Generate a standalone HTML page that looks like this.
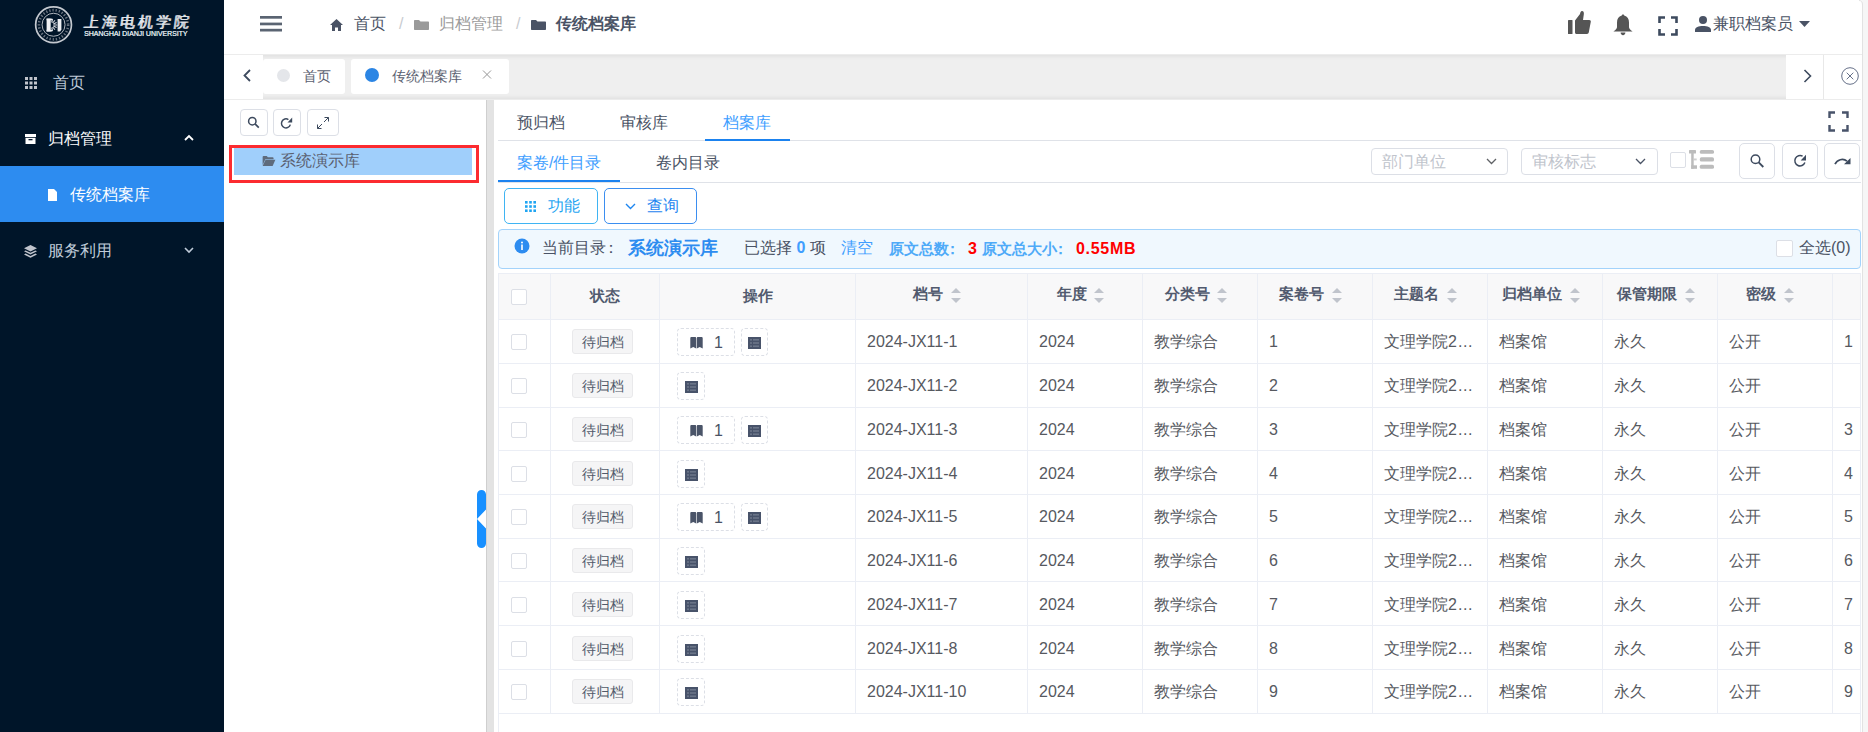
<!DOCTYPE html>
<html><head><meta charset="utf-8">
<style>
*{box-sizing:border-box;margin:0;padding:0}
html,body{width:1868px;height:732px;overflow:hidden;background:#fff;font-family:"Liberation Sans",sans-serif;font-size:16px;color:#606266}
.a{position:absolute}
svg{display:block}
#side{left:0;top:0;width:224px;height:732px;background:#001529}
.mi{position:absolute;left:0;width:224px;height:56px;line-height:58px;font-size:16px;color:#bfcbd9;white-space:nowrap}
#hdr{left:224px;top:0;width:1638px;height:55px;background:#fff;border-bottom:1px solid #ececec}
.bc{position:absolute;top:0;height:48px;line-height:48px;font-size:16px;white-space:nowrap}
#tabs{left:224px;top:55px;width:1637px;height:44px;background:#efefef;box-shadow:inset 0 3px 4px -2px rgba(0,0,0,.08),inset 0 -3px 4px -2px rgba(0,0,0,.08)}
.tab{position:absolute;top:4px;height:35px;background:#fff;border-radius:3px;font-size:14px;line-height:35px;color:#5a6070;white-space:nowrap}
#vline{left:1862px;top:0;width:1px;height:732px;background:#e2e2e2}
#vfill{left:1863px;top:0;width:5px;height:732px;background:#f6f6f6}
.tbtn{position:absolute;width:28px;height:27px;border:1px solid #dcdfe6;border-radius:4px;background:#fff}
.ptab{position:absolute;font-size:16px;color:#4a5365;white-space:nowrap;line-height:20px}
.sel{position:absolute;top:148px;width:137px;height:27px;border:1px solid #dcdfe6;border-radius:4px;background:#fff;font-size:16px;color:#c0c4cc;line-height:25px;padding-left:10px;white-space:nowrap}
.ibtn{position:absolute;top:143px;width:36px;height:36px;border:1px solid #dcdfe6;border-radius:5px;background:#fff}
.cb{position:absolute;width:16px;height:16px;border:1px solid #dcdfe6;border-radius:2px;background:#fff}
.th{position:absolute;top:286px;height:20px;line-height:20px;font-size:15px;font-weight:bold;color:#515a6e;white-space:nowrap}
.caret{position:absolute;width:10px;height:15px}
.td{position:absolute;height:20px;line-height:20px;font-size:16px;color:#56595f;white-space:nowrap}
.tag{position:absolute;left:572px;width:61px;height:25px;border:1px solid #e9e9eb;background:#f5f5f6;border-radius:3px;font-size:14px;line-height:24px;text-align:center;color:#515a6a}
.dbox{position:absolute;height:28px;border:1px dashed #dcdfe6;border-radius:4px}
</style></head><body>

<!-- sidebar -->
<div id="side" class="a">
  <!-- logo -->
  <svg class="a" style="left:34px;top:5px" width="40" height="40" viewBox="0 0 40 40">
    <circle cx="19.55" cy="19.75" r="17.9" fill="none" stroke="#c3c8cf" stroke-width="1.7"/>
    <circle cx="19.55" cy="19.75" r="14.6" fill="none" stroke="#8d949e" stroke-width="2.6" stroke-dasharray="1.3 1.9" opacity="0.75"/>
    <circle cx="19.55" cy="19.75" r="11.5" fill="none" stroke="#aeb4bc" stroke-width="1"/>
    <rect x="12.6" y="13.6" width="4.1" height="12.9" fill="#eef0f3"/>
    <rect x="12.6" y="13.6" width="5.6" height="1.7" fill="#eef0f3"/>
    <rect x="12.6" y="24.8" width="5.6" height="1.7" fill="#eef0f3"/>
    <path d="M17.67 17.49L18.60 14.01M18.67 18.01L20.99 15.25M19.36 18.90L22.62 17.38M19.60 20.00L23.20 20.00M19.36 21.10L22.62 22.62M18.67 21.99L20.99 24.75M17.67 22.51L18.60 25.99" stroke="#d5d9df" stroke-width="1.1"/>
    <path d="M23.6 14h3.8v10.5l-1.2 2h-2.6z" fill="#eef0f3"/>
  </svg>
  <div class="a" style="left:84px;top:12px;font-family:'Liberation Serif',serif;font-size:15px;font-weight:normal;color:#e4e7eb;letter-spacing:3px;white-space:nowrap;line-height:20px;transform:skewX(-8deg);text-shadow:0.4px 0 0 #e4e7eb">上海电机学院</div>
  <div class="a" style="left:84px;top:30px;font-size:7px;font-weight:normal;color:#dde1e6;white-space:nowrap;line-height:8px;letter-spacing:-0.05px;text-shadow:0.3px 0 0 #dde1e6">SHANGHAI DIANJI UNIVERSITY</div>

  <div class="mi" style="top:54px">
    <svg class="a" style="left:25px;top:23px" width="12" height="12" viewBox="0 0 12 12" fill="#c0c4cc">
      <rect x="0" y="0" width="3" height="3"/><rect x="4.5" y="0" width="3" height="3"/><rect x="9" y="0" width="3" height="3"/>
      <rect x="0" y="4.5" width="3" height="3"/><rect x="4.5" y="4.5" width="3" height="3"/><rect x="9" y="4.5" width="3" height="3"/>
      <rect x="0" y="9" width="3" height="3"/><rect x="4.5" y="9" width="3" height="3"/><rect x="9" y="9" width="3" height="3"/>
    </svg>
    <span class="a" style="left:53px;top:0">首页</span>
  </div>
  <div class="mi" style="top:110px;color:#fff">
    <svg class="a" style="left:25px;top:24px" width="11" height="10" viewBox="0 0 11 10" fill="#fff">
      <rect x="0" y="0" width="11" height="3"/><path d="M0.5 3.8h10V10H.5z"/><rect x="3.5" y="5" width="4" height="1.3" fill="#001529"/>
    </svg>
    <span class="a" style="left:48px;top:0">归档管理</span>
    <svg class="a" style="left:184px;top:24px" width="10" height="7" viewBox="0 0 10 7"><path d="M1 6L5 2l4 4" fill="none" stroke="#fff" stroke-width="1.8"/></svg>
  </div>
  <div class="mi" style="top:166px;background:#2d8cf0;color:#fff">
    <svg class="a" style="left:48px;top:23px" width="9" height="12" viewBox="0 0 9 12" fill="#fff"><path d="M0 0h6l3 3v9H0z"/></svg>
    <span class="a" style="left:70px;top:0">传统档案库</span>
  </div>
  <div class="mi" style="top:222px">
    <svg class="a" style="left:24px;top:23px" width="13" height="13" viewBox="0 0 13 13" fill="#c0c4cc">
      <path d="M6.5 0L13 3.2 6.5 6.4 0 3.2z"/><path d="M1.6 5.4L6.5 7.8l4.9-2.4L13 6.3 6.5 9.5 0 6.3z"/><path d="M1.6 8.6L6.5 11l4.9-2.4 1.6.9-6.5 3.2L0 9.5z"/>
    </svg>
    <span class="a" style="left:48px;top:0">服务利用</span>
    <svg class="a" style="left:184px;top:25px" width="10" height="7" viewBox="0 0 10 7"><path d="M1 1l4 4 4-4" fill="none" stroke="#bfcbd9" stroke-width="1.6"/></svg>
  </div>
</div>

<!-- header -->
<div id="hdr" class="a">
  <svg class="a" style="left:36px;top:16px" width="22" height="16" viewBox="0 0 22 16" fill="#5a6472">
    <rect x="0" y="0" width="22" height="2.7"/><rect x="0" y="6.6" width="22" height="2.7"/><rect x="0" y="12.8" width="22" height="2.7"/>
  </svg>
  <svg class="a" style="left:106px;top:19px" width="13" height="12" viewBox="0 0 13 12" fill="#4a5365"><path d="M6.5 0L13 6h-2v6H8V8.5H5V12H2V6H0z"/></svg>
  <span class="bc" style="left:130px;color:#4a5365">首页</span>
  <span class="bc" style="left:175px;color:#c8cbd0">/</span>
  <svg class="a" style="left:190px;top:20px" width="15" height="10" viewBox="0 0 15 10" fill="#9a9a9a"><path d="M0 1c0-.6.4-1 1-1h4l1.5 1.5H14c.6 0 1 .4 1 1V9c0 .6-.4 1-1 1H1c-.6 0-1-.4-1-1z"/></svg>
  <span class="bc" style="left:215px;color:#9a9a9a">归档管理</span>
  <span class="bc" style="left:292px;color:#c8cbd0">/</span>
  <svg class="a" style="left:307px;top:20px" width="15" height="10" viewBox="0 0 15 10" fill="#4a5365"><path d="M0 1c0-.6.4-1 1-1h4l1.5 1.5H14c.6 0 1 .4 1 1V9c0 .6-.4 1-1 1H1c-.6 0-1-.4-1-1z"/></svg>
  <span class="bc" style="left:332px;color:#4a5365;font-weight:bold">传统档案库</span>

  <!-- right icons -->
  <svg class="a" style="left:1344px;top:11px" width="23" height="23" viewBox="0 0 23 23" fill="#555">
    <rect x="0" y="9" width="4.5" height="14" rx="0.6"/>
    <path d="M7 9.5l5-6.5c.4-1.6.7-3 2-3 1.6 0 2.2 1.6 1.8 3.5L15 9h6.3c1 0 1.7.8 1.5 1.8l-2 10.5c-.2.9-.9 1.7-1.8 1.7H8.5C7.7 23 7 22.3 7 21.5z"/>
  </svg>
  <svg class="a" style="left:1389px;top:14px" width="20" height="22" viewBox="0 0 20 22" fill="#555">
    <path d="M10 0.5c.8 0 1.2.5 1.2 1.1 3.3.7 4.8 3.4 4.8 6.9v4.6c0 1.4.9 2.6 3.6 4.5H.4C3.1 15.7 4 14.5 4 13.1V8.5c0-3.5 1.5-6.2 4.8-6.9 0-.6.4-1.1 1.2-1.1z"/>
    <path d="M7.6 18.6h4.8c0 1.5-1 2.6-2.4 2.6s-2.4-1.1-2.4-2.6z"/>
  </svg>
  <svg class="a" style="left:1434px;top:16px" width="20" height="20" viewBox="0 0 20 20" fill="none" stroke="#3d4a5e" stroke-width="2.6">
    <path d="M1.5 7V1.5H7M13 1.5h5.5V7M18.5 13v5.5H13M7 18.5H1.5V13"/>
  </svg>
  <svg class="a" style="left:1471px;top:16px" width="16" height="16" viewBox="0 0 16 16" fill="#4a5365">
    <circle cx="8" cy="4" r="4"/><path d="M0 16v-2.2C0 11.5 3.5 10 8 10s8 1.5 8 3.8V16z"/>
  </svg>
  <span class="bc" style="left:1489px;color:#4a5365;top:0">兼职档案员</span>
  <svg class="a" style="left:1575px;top:21px" width="11" height="6" viewBox="0 0 11 6" fill="#4a5365"><path d="M0 0h11L5.5 6z"/></svg>
</div>

<!-- tag bar -->
<div id="tabs" class="a">
  <div class="a" style="left:0;top:0;width:39px;height:44px;background:#fff">
    <svg class="a" style="left:19px;top:14px" width="8" height="13" viewBox="0 0 8 13"><path d="M7 1L1.5 6.5 7 12" fill="none" stroke="#3d4a5e" stroke-width="1.8"/></svg>
  </div>
  <div class="tab" style="left:39px;width:82px">
    <span class="a" style="left:14px;top:9.5px;width:13px;height:13px;border-radius:50%;background:#e4e6ea"></span>
    <span class="a" style="left:40px;top:0">首页</span>
  </div>
  <div class="tab" style="left:127px;width:158px">
    <span class="a" style="left:14px;top:9px;width:14px;height:14px;border-radius:50%;background:#2b85e4"></span>
    <span class="a" style="left:41px;top:0">传统档案库</span>
    <svg class="a" style="left:131px;top:11px" width="10" height="9" viewBox="0 0 10 9"><path d="M1 .5l8 8M9 .5l-8 8" stroke="#959595" stroke-width="1"/></svg>
  </div>
  <div class="a" style="left:1562px;top:0;width:38px;height:44px;background:#fff;border-right:1px solid #e8e8e8">
    <svg class="a" style="left:17px;top:14px" width="9" height="14" viewBox="0 0 9 14"><path d="M1.5 1l6 6-6 6" fill="none" stroke="#3d4a5e" stroke-width="1.6"/></svg>
  </div>
  <div class="a" style="left:1600px;top:0;width:37px;height:44px;background:#fff">
    <svg class="a" style="left:17px;top:12px" width="18" height="18" viewBox="0 0 18 18" fill="none" stroke="#55607a" stroke-width="0.9"><circle cx="9" cy="9" r="8.3"/><path d="M5.7 5.7l6.6 6.6M12.3 5.7l-6.6 6.6"/></svg>
  </div>
</div>

<div class="a" style="left:224px;top:99px;width:1637px;height:1px;background:#ececec"></div>
<div id="vline" class="a"></div>
<div id="vfill" class="a"></div>
<svg class="a" style="left:1854px;top:0" width="14" height="10" viewBox="0 0 14 10"><path d="M5 0Q8.5 0 8.5 5V10H14V0z" fill="#f6f6f6"/><path d="M5 0.5Q8.5 0.5 8.5 5V10" fill="none" stroke="#e2e2e2" stroke-width="1"/></svg>

<!-- left tree panel -->
<div class="tbtn" style="left:240px;top:109px">
  <svg class="a" style="left:6px;top:6px" width="14" height="14" viewBox="0 0 14 14" fill="none" stroke="#3d4a5e"><circle cx="5.3" cy="5.2" r="3.7" stroke-width="1.5"/><path d="M8 7.9l3.8 3.8" stroke-width="1.7"/></svg>
</div>
<div class="tbtn" style="left:273px;top:109px">
  <svg class="a" style="left:6px;top:7px" width="14" height="13" viewBox="0 0 14 13"><path d="M10.3 7.6A4.5 4.5 0 1 1 8.4 2.6" fill="none" stroke="#3d4a5e" stroke-width="1.5"/><path d="M12.2 0.6v4.9H7.5z" fill="#3d4a5e"/></svg>
</div>
<div class="tbtn" style="left:307px;top:109px;width:32px">
  <svg class="a" style="left:8px;top:6px" width="14" height="14" viewBox="0 0 14 14" fill="none" stroke="#3d4a5e" stroke-width="1"><path d="M8.5 1.5h4v4M12.5 1.5L8 6M5.5 12.5h-4v-4M1.5 12.5L6 8"/></svg>
</div>
<div class="a" style="left:229px;top:145px;width:250px;height:38px;border:3px solid #fc2b30"></div>
<div class="a" style="left:234px;top:148px;width:238px;height:27px;background:#a0cffb"></div>
<svg class="a" style="left:262px;top:156px" width="14" height="10" viewBox="0 0 14 11" fill="#5e6b7c"><path d="M0 1c0-.6.4-1 1-1h3.5l1.3 1.3H11c.6 0 1 .4 1 1V3.5H3L0 10z"/><path d="M3.2 4.2H14L11 11H0z"/></svg>
<div class="a" style="left:280px;top:151px;font-size:16px;line-height:20px;color:#5a6070;white-space:nowrap">系统演示库</div>

<!-- splitter -->
<div class="a" style="left:486px;top:100px;width:8px;height:632px;background:#e3e3e3;border-left:1px solid #cfcfcf"></div>
<svg class="a" style="left:477px;top:490px" width="9" height="58" viewBox="0 0 9 58"><path d="M4.5 0C7 0 9 2 9 4.5V19.5L0 29 9 38.5V53.5C9 56 7 58 4.5 58S0 56 0 53.5V4.5C0 2 2 0 4.5 0z" fill="#1890ff"/></svg>

<!-- right panel tabs -->
<div class="a" style="left:498px;top:140px;width:1363px;height:1px;background:#dfe2e8"></div>
<div class="a" style="left:705px;top:139px;width:85px;height:2px;background:#1b82ef"></div>
<span class="ptab" style="left:517px;top:113px">预归档</span>
<span class="ptab" style="left:620px;top:113px">审核库</span>
<span class="ptab" style="left:723px;top:113px;color:#409eff">档案库</span>
<svg class="a" style="left:1828px;top:111px" width="21" height="21" viewBox="0 0 21 21" fill="none" stroke="#48536a" stroke-width="2.4"><path d="M1.5 7V1.5H7M14 1.5h5.5V7M19.5 14v5.5H14M7 19.5H1.5V14"/></svg>

<div class="a" style="left:498px;top:182px;width:1363px;height:1px;background:#dfe2e8"></div>
<div class="a" style="left:498px;top:180px;width:122px;height:2px;background:#1b82ef"></div>
<span class="ptab" style="left:517px;top:153px;color:#409eff">案卷/件目录</span>
<span class="ptab" style="left:656px;top:153px">卷内目录</span>

<div class="sel" style="left:1371px">部门单位<svg class="a" style="left:114px;top:9px" width="11" height="7" viewBox="0 0 11 7"><path d="M1 1l4.5 4.5L10 1" fill="none" stroke="#606266" stroke-width="1.3"/></svg></div>
<div class="sel" style="left:1521px">审核标志<svg class="a" style="left:113px;top:9px" width="11" height="7" viewBox="0 0 11 7"><path d="M1 1l4.5 4.5L10 1" fill="none" stroke="#4a5365" stroke-width="1.3"/></svg></div>
<div class="cb" style="left:1670px;top:152px;width:16px;height:16px"></div>
<svg class="a" style="left:1689px;top:150px" width="26" height="19" viewBox="0 0 26 19" fill="#bcbcbc">
  <rect x="0" y="0" width="7" height="3.6" rx="0.6"/><rect x="2.2" y="0" width="2.5" height="18.8"/><rect x="4.7" y="8.5" width="3" height="1.9" opacity="0.7"/><rect x="2.2" y="15.3" width="5.8" height="3.5"/>
  <rect x="10.8" y="0" width="14.2" height="3.8" rx="1.6"/><rect x="10.8" y="7.3" width="14.2" height="4.3" rx="1.6"/><rect x="10.8" y="14.7" width="14.2" height="4.1" rx="1.6"/>
</svg>
<div class="ibtn" style="left:1739px">
  <svg class="a" style="left:5px;top:6px" width="25" height="22" viewBox="0 0 25 22" fill="none" stroke="#3d4a5e"><circle cx="10.5" cy="9.2" r="4.3" stroke-width="1.5"/><path d="M13.7 12.4l4.6 4.6" stroke-width="1.8"/></svg>
</div>
<div class="ibtn" style="left:1782px">
  <svg class="a" style="left:5px;top:6px" width="24" height="22" viewBox="0 0 24 22"><path d="M16.9 12.6A5.2 5.2 0 1 1 14.6 6.2" fill="none" stroke="#3d4a5e" stroke-width="1.5"/><path d="M18 4.8v5.7h-5.3z" fill="#3d4a5e"/></svg>
</div>
<div class="ibtn" style="left:1824px">
  <svg class="a" style="left:5px;top:6px" width="26" height="22" viewBox="0 0 26 22"><path d="M5 14.2C7 9.8 13 7.8 17 11.2" fill="none" stroke="#3d4a5e" stroke-width="1.7"/><path d="M20.5 8v6.2h-6.5z" fill="#3d4a5e"/></svg>
</div>

<!-- buttons -->
<div class="a" style="left:504px;top:188px;width:94px;height:36px;border:1px solid #3fb4f3;border-radius:5px;background:#fff">
  <svg class="a" style="left:20px;top:12px" width="11" height="11" viewBox="0 0 11 11" fill="#1fa5f2"><rect x="0" y="0" width="2.6" height="2.6"/><rect x="4.2" y="0" width="2.6" height="2.6"/><rect x="8.4" y="0" width="2.6" height="2.6"/><rect x="0" y="4.2" width="2.6" height="2.6"/><rect x="4.2" y="4.2" width="2.6" height="2.6"/><rect x="8.4" y="4.2" width="2.6" height="2.6"/><rect x="0" y="8.4" width="2.6" height="2.6"/><rect x="4.2" y="8.4" width="2.6" height="2.6"/><rect x="8.4" y="8.4" width="2.6" height="2.6"/></svg>
  <span class="a" style="left:43px;top:7px;font-size:16px;line-height:20px;color:#1fa5f2;white-space:nowrap">功能</span>
</div>
<div class="a" style="left:604px;top:188px;width:93px;height:36px;border:1px solid #3b8ef0;border-radius:5px;background:#fff">
  <svg class="a" style="left:20px;top:14px" width="11" height="7" viewBox="0 0 11 7"><path d="M1 1l4.5 4.5L10 1" fill="none" stroke="#1e86f0" stroke-width="1.4"/></svg>
  <span class="a" style="left:42px;top:7px;font-size:16px;line-height:20px;color:#1e86f0;white-space:nowrap">查询</span>
</div>

<!-- info bar -->
<div class="a" style="left:498px;top:229px;width:1363px;height:40px;border:1px solid #a3d3fb;border-radius:4px;background:#f0f8fe"></div>
<svg class="a" style="left:514px;top:238px" width="16" height="16" viewBox="0 0 16 16"><circle cx="8" cy="8" r="7.5" fill="#2d8cf0"/><rect x="7.2" y="6.5" width="1.6" height="5.5" fill="#fff"/><circle cx="8" cy="4.5" r="1" fill="#fff"/></svg>
<span class="a" style="left:542px;top:238px;font-size:16px;line-height:20px;color:#4a5365;white-space:nowrap">当前目录</span><span class="a" style="left:603px;top:238px;font-size:16px;line-height:20px;color:#4a5365">：</span>
<span class="a" style="left:628px;top:237px;font-size:18px;line-height:22px;font-weight:bold;color:#2d8cf0;white-space:nowrap">系统演示库</span>
<span class="a" style="left:744px;top:238px;font-size:16px;line-height:20px;color:#4a5365;white-space:nowrap">已选择 <b style="color:#409eff">0</b> 项</span>
<span class="a" style="left:841px;top:238px;font-size:16px;line-height:20px;color:#409eff;white-space:nowrap">清空</span>
<span class="a" style="left:889px;top:239px;font-size:15px;line-height:20px;font-weight:bold;color:#4eaaf8;white-space:nowrap">原文总数</span><span class="a" style="left:945px;top:239px;font-size:15px;line-height:20px;font-weight:bold;color:#4eaaf8">：</span>
<span class="a" style="left:968px;top:239px;font-size:16px;line-height:20px;font-weight:bold;color:#f00;white-space:nowrap">3</span>
<span class="a" style="left:982px;top:239px;font-size:15px;line-height:20px;font-weight:bold;color:#4eaaf8;white-space:nowrap">原文总大小</span><span class="a" style="left:1053px;top:239px;font-size:15px;line-height:20px;font-weight:bold;color:#4eaaf8">：</span>
<span class="a" style="left:1076px;top:239px;font-size:16px;line-height:20px;font-weight:bold;color:#f00;white-space:nowrap;letter-spacing:0.7px">0.55MB</span>
<div class="cb" style="left:1776px;top:240px;width:17px;height:17px"></div>
<span class="a" style="left:1799px;top:238px;font-size:16px;line-height:20px;color:#4a5365;white-space:nowrap">全选(0)</span>

<!-- TABLE -->
<div class="a" style="left:498px;top:273px;width:1363px;height:47px;background:#f8f8f9"></div>
<div class="a" style="left:498px;top:273px;width:1px;height:459px;background:#ebeef5"></div>
<div class="a" style="left:1860px;top:273px;width:1px;height:459px;background:#ebeef5"></div>
<div class="a" style="left:498px;top:273px;width:1363px;height:1px;background:#ebeef5"></div>
<div class="a" style="left:498px;top:319px;width:1363px;height:1px;background:#ebeef5"></div>
<div class="a" style="left:498px;top:363px;width:1363px;height:1px;background:#ebeef5"></div>
<div class="a" style="left:498px;top:407px;width:1363px;height:1px;background:#ebeef5"></div>
<div class="a" style="left:498px;top:450px;width:1363px;height:1px;background:#ebeef5"></div>
<div class="a" style="left:498px;top:494px;width:1363px;height:1px;background:#ebeef5"></div>
<div class="a" style="left:498px;top:538px;width:1363px;height:1px;background:#ebeef5"></div>
<div class="a" style="left:498px;top:581px;width:1363px;height:1px;background:#ebeef5"></div>
<div class="a" style="left:498px;top:625px;width:1363px;height:1px;background:#ebeef5"></div>
<div class="a" style="left:498px;top:669px;width:1363px;height:1px;background:#ebeef5"></div>
<div class="a" style="left:498px;top:713px;width:1363px;height:1px;background:#ebeef5"></div>
<div class="a" style="left:550px;top:273px;width:1px;height:441px;background:#ebeef5"></div>
<div class="a" style="left:659px;top:273px;width:1px;height:441px;background:#ebeef5"></div>
<div class="a" style="left:855px;top:273px;width:1px;height:441px;background:#ebeef5"></div>
<div class="a" style="left:1027px;top:273px;width:1px;height:441px;background:#ebeef5"></div>
<div class="a" style="left:1142px;top:273px;width:1px;height:441px;background:#ebeef5"></div>
<div class="a" style="left:1257px;top:273px;width:1px;height:441px;background:#ebeef5"></div>
<div class="a" style="left:1372px;top:273px;width:1px;height:441px;background:#ebeef5"></div>
<div class="a" style="left:1487px;top:273px;width:1px;height:441px;background:#ebeef5"></div>
<div class="a" style="left:1602px;top:273px;width:1px;height:441px;background:#ebeef5"></div>
<div class="a" style="left:1717px;top:273px;width:1px;height:441px;background:#ebeef5"></div>
<div class="a" style="left:1832px;top:273px;width:1px;height:441px;background:#ebeef5"></div>
<div class="cb" style="left:511px;top:289px"></div>
<span class="th" style="left:590px;top:286px">状态</span>
<span class="th" style="left:743px;top:286px">操作</span>
<span class="th" style="left:913px;top:284px">档号</span>
<svg class="caret" style="left:951px;top:288px" width="10" height="15" viewBox="0 0 10 15" fill="#c0c4cc"><path d="M0 5L5 0l5 5z"/><path d="M0 10l5 5 5-5z"/></svg>
<span class="th" style="left:1057px;top:284px">年度</span>
<svg class="caret" style="left:1094px;top:288px" width="10" height="15" viewBox="0 0 10 15" fill="#c0c4cc"><path d="M0 5L5 0l5 5z"/><path d="M0 10l5 5 5-5z"/></svg>
<span class="th" style="left:1165px;top:284px">分类号</span>
<svg class="caret" style="left:1217px;top:288px" width="10" height="15" viewBox="0 0 10 15" fill="#c0c4cc"><path d="M0 5L5 0l5 5z"/><path d="M0 10l5 5 5-5z"/></svg>
<span class="th" style="left:1279px;top:284px">案卷号</span>
<svg class="caret" style="left:1332px;top:288px" width="10" height="15" viewBox="0 0 10 15" fill="#c0c4cc"><path d="M0 5L5 0l5 5z"/><path d="M0 10l5 5 5-5z"/></svg>
<span class="th" style="left:1394px;top:284px">主题名</span>
<svg class="caret" style="left:1447px;top:288px" width="10" height="15" viewBox="0 0 10 15" fill="#c0c4cc"><path d="M0 5L5 0l5 5z"/><path d="M0 10l5 5 5-5z"/></svg>
<span class="th" style="left:1502px;top:284px">归档单位</span>
<svg class="caret" style="left:1570px;top:288px" width="10" height="15" viewBox="0 0 10 15" fill="#c0c4cc"><path d="M0 5L5 0l5 5z"/><path d="M0 10l5 5 5-5z"/></svg>
<span class="th" style="left:1617px;top:284px">保管期限</span>
<svg class="caret" style="left:1685px;top:288px" width="10" height="15" viewBox="0 0 10 15" fill="#c0c4cc"><path d="M0 5L5 0l5 5z"/><path d="M0 10l5 5 5-5z"/></svg>
<span class="th" style="left:1746px;top:284px">密级</span>
<svg class="caret" style="left:1784px;top:288px" width="10" height="15" viewBox="0 0 10 15" fill="#c0c4cc"><path d="M0 5L5 0l5 5z"/><path d="M0 10l5 5 5-5z"/></svg>
<div class="cb" style="left:511px;top:334px"></div>
<div class="tag" style="top:329px">待归档</div>
<div class="dbox" style="left:677px;top:328px;width:58px"></div>
<svg class="a" style="left:690px;top:337px" width="13" height="12" viewBox="0 0 13 12" fill="#4a5468"><path d="M0.3 1.2C.3.5.8 0 1.5 0h3.5c.7 0 1.2.5 1.2 1.2V11.5L3.25 10 .3 11.5z"/><path d="M6.8 1.2C6.8.5 7.3 0 8 0h3.5c.7 0 1.2.5 1.2 1.2V11.5L9.75 10 6.8 11.5z"/></svg>
<span class="td" style="left:714px;top:333px;color:#4a5365">1</span>
<div class="dbox" style="left:741px;top:328px;width:27px"></div>
<svg class="a" style="left:748px;top:337px" width="13" height="12" viewBox="0 0 13 12"><rect x="0" y="0" width="13" height="12" fill="#48536a"/><g fill="#6b7588"><rect x="2" y="2" width="2" height="1.6"/><rect x="5" y="2" width="6" height="1.6"/><rect x="2" y="5.2" width="2" height="1.6"/><rect x="5" y="5.2" width="6" height="1.6"/><rect x="2" y="8.4" width="2" height="1.6"/><rect x="5" y="8.4" width="6" height="1.6"/></g></svg>
<span class="td" style="left:867px;top:332px">2024-JX11-1</span>
<span class="td" style="left:1039px;top:332px">2024</span>
<span class="td" style="left:1154px;top:332px">教学综合</span>
<span class="td" style="left:1269px;top:332px">1</span>
<span class="td" style="left:1384px;top:332px">文理学院2<span style="margin-left:1px;letter-spacing:0.6px">...</span></span>
<span class="td" style="left:1499px;top:332px">档案馆</span>
<span class="td" style="left:1614px;top:332px">永久</span>
<span class="td" style="left:1729px;top:332px">公开</span>
<span class="td" style="left:1844px;top:332px">1</span>
<div class="cb" style="left:511px;top:378px"></div>
<div class="tag" style="top:373px">待归档</div>
<div class="dbox" style="left:677px;top:372px;width:28px"></div>
<svg class="a" style="left:685px;top:381px" width="13" height="12" viewBox="0 0 13 12"><rect x="0" y="0" width="13" height="12" fill="#48536a"/><g fill="#6b7588"><rect x="2" y="2" width="2" height="1.6"/><rect x="5" y="2" width="6" height="1.6"/><rect x="2" y="5.2" width="2" height="1.6"/><rect x="5" y="5.2" width="6" height="1.6"/><rect x="2" y="8.4" width="2" height="1.6"/><rect x="5" y="8.4" width="6" height="1.6"/></g></svg>
<span class="td" style="left:867px;top:376px">2024-JX11-2</span>
<span class="td" style="left:1039px;top:376px">2024</span>
<span class="td" style="left:1154px;top:376px">教学综合</span>
<span class="td" style="left:1269px;top:376px">2</span>
<span class="td" style="left:1384px;top:376px">文理学院2<span style="margin-left:1px;letter-spacing:0.6px">...</span></span>
<span class="td" style="left:1499px;top:376px">档案馆</span>
<span class="td" style="left:1614px;top:376px">永久</span>
<span class="td" style="left:1729px;top:376px">公开</span>
<div class="cb" style="left:511px;top:422px"></div>
<div class="tag" style="top:417px">待归档</div>
<div class="dbox" style="left:677px;top:416px;width:58px"></div>
<svg class="a" style="left:690px;top:425px" width="13" height="12" viewBox="0 0 13 12" fill="#4a5468"><path d="M0.3 1.2C.3.5.8 0 1.5 0h3.5c.7 0 1.2.5 1.2 1.2V11.5L3.25 10 .3 11.5z"/><path d="M6.8 1.2C6.8.5 7.3 0 8 0h3.5c.7 0 1.2.5 1.2 1.2V11.5L9.75 10 6.8 11.5z"/></svg>
<span class="td" style="left:714px;top:421px;color:#4a5365">1</span>
<div class="dbox" style="left:741px;top:416px;width:27px"></div>
<svg class="a" style="left:748px;top:425px" width="13" height="12" viewBox="0 0 13 12"><rect x="0" y="0" width="13" height="12" fill="#48536a"/><g fill="#6b7588"><rect x="2" y="2" width="2" height="1.6"/><rect x="5" y="2" width="6" height="1.6"/><rect x="2" y="5.2" width="2" height="1.6"/><rect x="5" y="5.2" width="6" height="1.6"/><rect x="2" y="8.4" width="2" height="1.6"/><rect x="5" y="8.4" width="6" height="1.6"/></g></svg>
<span class="td" style="left:867px;top:420px">2024-JX11-3</span>
<span class="td" style="left:1039px;top:420px">2024</span>
<span class="td" style="left:1154px;top:420px">教学综合</span>
<span class="td" style="left:1269px;top:420px">3</span>
<span class="td" style="left:1384px;top:420px">文理学院2<span style="margin-left:1px;letter-spacing:0.6px">...</span></span>
<span class="td" style="left:1499px;top:420px">档案馆</span>
<span class="td" style="left:1614px;top:420px">永久</span>
<span class="td" style="left:1729px;top:420px">公开</span>
<span class="td" style="left:1844px;top:420px">3</span>
<div class="cb" style="left:511px;top:466px"></div>
<div class="tag" style="top:461px">待归档</div>
<div class="dbox" style="left:677px;top:460px;width:28px"></div>
<svg class="a" style="left:685px;top:469px" width="13" height="12" viewBox="0 0 13 12"><rect x="0" y="0" width="13" height="12" fill="#48536a"/><g fill="#6b7588"><rect x="2" y="2" width="2" height="1.6"/><rect x="5" y="2" width="6" height="1.6"/><rect x="2" y="5.2" width="2" height="1.6"/><rect x="5" y="5.2" width="6" height="1.6"/><rect x="2" y="8.4" width="2" height="1.6"/><rect x="5" y="8.4" width="6" height="1.6"/></g></svg>
<span class="td" style="left:867px;top:464px">2024-JX11-4</span>
<span class="td" style="left:1039px;top:464px">2024</span>
<span class="td" style="left:1154px;top:464px">教学综合</span>
<span class="td" style="left:1269px;top:464px">4</span>
<span class="td" style="left:1384px;top:464px">文理学院2<span style="margin-left:1px;letter-spacing:0.6px">...</span></span>
<span class="td" style="left:1499px;top:464px">档案馆</span>
<span class="td" style="left:1614px;top:464px">永久</span>
<span class="td" style="left:1729px;top:464px">公开</span>
<span class="td" style="left:1844px;top:464px">4</span>
<div class="cb" style="left:511px;top:509px"></div>
<div class="tag" style="top:504px">待归档</div>
<div class="dbox" style="left:677px;top:503px;width:58px"></div>
<svg class="a" style="left:690px;top:512px" width="13" height="12" viewBox="0 0 13 12" fill="#4a5468"><path d="M0.3 1.2C.3.5.8 0 1.5 0h3.5c.7 0 1.2.5 1.2 1.2V11.5L3.25 10 .3 11.5z"/><path d="M6.8 1.2C6.8.5 7.3 0 8 0h3.5c.7 0 1.2.5 1.2 1.2V11.5L9.75 10 6.8 11.5z"/></svg>
<span class="td" style="left:714px;top:508px;color:#4a5365">1</span>
<div class="dbox" style="left:741px;top:503px;width:27px"></div>
<svg class="a" style="left:748px;top:512px" width="13" height="12" viewBox="0 0 13 12"><rect x="0" y="0" width="13" height="12" fill="#48536a"/><g fill="#6b7588"><rect x="2" y="2" width="2" height="1.6"/><rect x="5" y="2" width="6" height="1.6"/><rect x="2" y="5.2" width="2" height="1.6"/><rect x="5" y="5.2" width="6" height="1.6"/><rect x="2" y="8.4" width="2" height="1.6"/><rect x="5" y="8.4" width="6" height="1.6"/></g></svg>
<span class="td" style="left:867px;top:507px">2024-JX11-5</span>
<span class="td" style="left:1039px;top:507px">2024</span>
<span class="td" style="left:1154px;top:507px">教学综合</span>
<span class="td" style="left:1269px;top:507px">5</span>
<span class="td" style="left:1384px;top:507px">文理学院2<span style="margin-left:1px;letter-spacing:0.6px">...</span></span>
<span class="td" style="left:1499px;top:507px">档案馆</span>
<span class="td" style="left:1614px;top:507px">永久</span>
<span class="td" style="left:1729px;top:507px">公开</span>
<span class="td" style="left:1844px;top:507px">5</span>
<div class="cb" style="left:511px;top:553px"></div>
<div class="tag" style="top:548px">待归档</div>
<div class="dbox" style="left:677px;top:547px;width:28px"></div>
<svg class="a" style="left:685px;top:556px" width="13" height="12" viewBox="0 0 13 12"><rect x="0" y="0" width="13" height="12" fill="#48536a"/><g fill="#6b7588"><rect x="2" y="2" width="2" height="1.6"/><rect x="5" y="2" width="6" height="1.6"/><rect x="2" y="5.2" width="2" height="1.6"/><rect x="5" y="5.2" width="6" height="1.6"/><rect x="2" y="8.4" width="2" height="1.6"/><rect x="5" y="8.4" width="6" height="1.6"/></g></svg>
<span class="td" style="left:867px;top:551px">2024-JX11-6</span>
<span class="td" style="left:1039px;top:551px">2024</span>
<span class="td" style="left:1154px;top:551px">教学综合</span>
<span class="td" style="left:1269px;top:551px">6</span>
<span class="td" style="left:1384px;top:551px">文理学院2<span style="margin-left:1px;letter-spacing:0.6px">...</span></span>
<span class="td" style="left:1499px;top:551px">档案馆</span>
<span class="td" style="left:1614px;top:551px">永久</span>
<span class="td" style="left:1729px;top:551px">公开</span>
<span class="td" style="left:1844px;top:551px">6</span>
<div class="cb" style="left:511px;top:597px"></div>
<div class="tag" style="top:592px">待归档</div>
<div class="dbox" style="left:677px;top:591px;width:28px"></div>
<svg class="a" style="left:685px;top:600px" width="13" height="12" viewBox="0 0 13 12"><rect x="0" y="0" width="13" height="12" fill="#48536a"/><g fill="#6b7588"><rect x="2" y="2" width="2" height="1.6"/><rect x="5" y="2" width="6" height="1.6"/><rect x="2" y="5.2" width="2" height="1.6"/><rect x="5" y="5.2" width="6" height="1.6"/><rect x="2" y="8.4" width="2" height="1.6"/><rect x="5" y="8.4" width="6" height="1.6"/></g></svg>
<span class="td" style="left:867px;top:595px">2024-JX11-7</span>
<span class="td" style="left:1039px;top:595px">2024</span>
<span class="td" style="left:1154px;top:595px">教学综合</span>
<span class="td" style="left:1269px;top:595px">7</span>
<span class="td" style="left:1384px;top:595px">文理学院2<span style="margin-left:1px;letter-spacing:0.6px">...</span></span>
<span class="td" style="left:1499px;top:595px">档案馆</span>
<span class="td" style="left:1614px;top:595px">永久</span>
<span class="td" style="left:1729px;top:595px">公开</span>
<span class="td" style="left:1844px;top:595px">7</span>
<div class="cb" style="left:511px;top:641px"></div>
<div class="tag" style="top:636px">待归档</div>
<div class="dbox" style="left:677px;top:635px;width:28px"></div>
<svg class="a" style="left:685px;top:644px" width="13" height="12" viewBox="0 0 13 12"><rect x="0" y="0" width="13" height="12" fill="#48536a"/><g fill="#6b7588"><rect x="2" y="2" width="2" height="1.6"/><rect x="5" y="2" width="6" height="1.6"/><rect x="2" y="5.2" width="2" height="1.6"/><rect x="5" y="5.2" width="6" height="1.6"/><rect x="2" y="8.4" width="2" height="1.6"/><rect x="5" y="8.4" width="6" height="1.6"/></g></svg>
<span class="td" style="left:867px;top:639px">2024-JX11-8</span>
<span class="td" style="left:1039px;top:639px">2024</span>
<span class="td" style="left:1154px;top:639px">教学综合</span>
<span class="td" style="left:1269px;top:639px">8</span>
<span class="td" style="left:1384px;top:639px">文理学院2<span style="margin-left:1px;letter-spacing:0.6px">...</span></span>
<span class="td" style="left:1499px;top:639px">档案馆</span>
<span class="td" style="left:1614px;top:639px">永久</span>
<span class="td" style="left:1729px;top:639px">公开</span>
<span class="td" style="left:1844px;top:639px">8</span>
<div class="cb" style="left:511px;top:684px"></div>
<div class="tag" style="top:679px">待归档</div>
<div class="dbox" style="left:677px;top:678px;width:28px"></div>
<svg class="a" style="left:685px;top:687px" width="13" height="12" viewBox="0 0 13 12"><rect x="0" y="0" width="13" height="12" fill="#48536a"/><g fill="#6b7588"><rect x="2" y="2" width="2" height="1.6"/><rect x="5" y="2" width="6" height="1.6"/><rect x="2" y="5.2" width="2" height="1.6"/><rect x="5" y="5.2" width="6" height="1.6"/><rect x="2" y="8.4" width="2" height="1.6"/><rect x="5" y="8.4" width="6" height="1.6"/></g></svg>
<span class="td" style="left:867px;top:682px">2024-JX11-10</span>
<span class="td" style="left:1039px;top:682px">2024</span>
<span class="td" style="left:1154px;top:682px">教学综合</span>
<span class="td" style="left:1269px;top:682px">9</span>
<span class="td" style="left:1384px;top:682px">文理学院2<span style="margin-left:1px;letter-spacing:0.6px">...</span></span>
<span class="td" style="left:1499px;top:682px">档案馆</span>
<span class="td" style="left:1614px;top:682px">永久</span>
<span class="td" style="left:1729px;top:682px">公开</span>
<span class="td" style="left:1844px;top:682px">9</span>
<!-- /TABLE -->

</body></html>
